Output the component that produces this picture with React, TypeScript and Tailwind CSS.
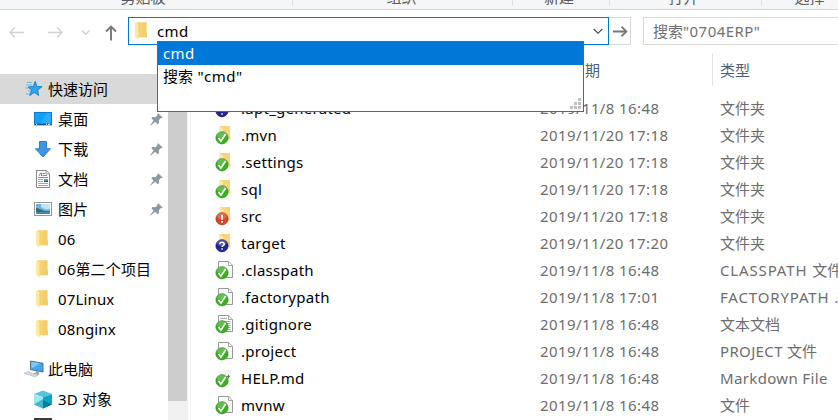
import type { ReactNode } from "react";

function FolderIcon({ className = "" }: { className?: string }) {
  return (
    <svg width="12" height="18" viewBox="0 0 12 18" className={className}>
      <path d="M1.5 .3h10v10l.5 1v4H4L1.5 9z" fill="#f7d374" />
      <path d="M8 .3h3.5v10l.5 1v4H6z" fill="#efc55f" opacity=".45" />
      <path d="M0 .3l3.8 2.4v13L3 17.6 0 14.9z" fill="#ffe9a2" />
      <path d="M3.8 2.7v13" stroke="#eec868" strokeWidth=".6" />
    </svg>
  );
}

function StarIcon() {
  return (
    <svg width="18" height="18" viewBox="0 0 18 18">
      <path d="M1 5h6M2 2.5h5M0 8h6M3 11h4M1 14h4" stroke="#63b5e6" strokeWidth=".9" />
      <path d="M10.2 1.3l1.6 5 5.3.4-4.4 3.3 1 5.5-4.4-3-4.6 3 1.9-5.3L3.2 7l5.1-.6z" fill="#2ba3f2" stroke="#1581cb" strokeWidth=".9" />
    </svg>
  );
}

function DesktopIcon() {
  return (
    <svg width="18" height="14" viewBox="0 0 18 14">
      <rect x=".5" y=".5" width="17" height="12.4" fill="#12a0fa" stroke="#0c7ccb" />
      <path d="M6 12L13 1h4v11z" fill="#2badff" />
      <path d="M1 12.3h16" stroke="#084f8c" strokeWidth="1.2" />
      <path d="M2 12.3h1M12 12.3h1M14 12.3h2" stroke="#fff" />
    </svg>
  );
}

function DownloadIcon() {
  return (
    <svg width="18" height="18" viewBox="0 0 18 18">
      <path d="M5.5 1.5h7v7.3h4L9 17 1.5 8.8h4z" fill="#3d97e6" stroke="#2b7cc9" />
    </svg>
  );
}

function DocumentIcon() {
  return (
    <svg width="16" height="18" viewBox="0 0 16 18" className="ml-px">
      <path d="M1.5 .5h9.8l3.2 3.2v13.8h-13z" fill="#fff" stroke="#858585" />
      <path d="M11 .8v3.2h3.3" fill="#e9e9e9" stroke="#858585" strokeWidth=".8" />
      <path d="M4 6l1.6-3h.9v3M7.5 3.5H10M7.5 5.5H12M3 7.5h10" fill="none" stroke="#2b8fc9" strokeWidth=".9" />
      <path d="M3 9.5h5M3 11.5h5M3 13.5h10M3 15.5h10" stroke="#9a9a9a" strokeWidth=".9" />
      <rect x="9" y="9" width="4" height="3" fill="#51a5cb" />
      <path d="M9 11l4-.6V12H9z" fill="#27597c" />
    </svg>
  );
}

function PictureIcon() {
  return (
    <svg width="18" height="14" viewBox="0 0 18 14">
      <rect x=".5" y=".5" width="17" height="13" fill="#fff" stroke="#969696" />
      <rect x="2" y="2" width="14" height="10" fill="#6fb1ea" />
      <path d="M7 2h9v5c-4 1-6 0-9-2z" fill="#c2e4f8" />
      <path d="M2 6c4 .2 6 3 11 3.2l3-.2v1.4H2z" fill="#3d6c60" />
      <path d="M2 10.4l14-.9V12H2z" fill="#4486b0" />
    </svg>
  );
}

function ComputerIcon() {
  return (
    <svg width="20" height="18" viewBox="0 0 20 18">
      <path d="M6.5 1l12.5 2.3v8.7L6.5 9.6z" fill="#3da9f5" stroke="#53636f" strokeWidth=".9" />
      <path d="M7.3 8.8L16 3.2l-8.7-1.5z" fill="#79c8fa" />
      <path d="M12 11l3 .7-.5 2-3-.8zM11 13l5 1.1-2 .8-5-1.2z" fill="#8d9da8" />
      <path d="M0 13.4l3.5-1.8L14 15.3 11.4 17z" fill="#e0e5e9" stroke="#a5b1ba" strokeWidth=".5" />
      <path d="M2 13.3l9.5 2.9M3.5 12.5l9 2.8" stroke="#a7b3bc" strokeWidth=".5" strokeDasharray="1 .8" />
    </svg>
  );
}

function CubeIcon() {
  return (
    <svg width="18" height="19" viewBox="0 0 18 19">
      <path d="M9 .4l9 3.7-9 3.1L0 4.1z" fill="#55c6d8" />
      <path d="M0 4.1l9 3.1v11.4L0 14.5z" fill="#9be9ef" />
      <path d="M0 14.5L9 9v9.6z" fill="#3fb6c9" />
      <path d="M18 4.1L9 7.2v11.4l9-4.1z" fill="#08a3c7" />
      <path d="M18 14.5L9 10v8.6z" fill="#087f9b" />
    </svg>
  );
}

function PinIcon() {
  return (
    <svg width="13" height="13" viewBox="0 0 13 13">
      <path d="M8.1.2l4.6 4.3-1.4.7-.5-.2-2 2.2.3 2.9-1.3 1.2-2.5-2.5L.5 12.6l-.4-.4 3.5-4.7L1.4 5.2 2.5 4l3 .3L7.6 2l-.3-.7z" fill="#8d979e" />
    </svg>
  );
}

type Status = "ok" | "alert" | "unknown";
type Kind = "folder" | "file" | "text" | "markdown";

function FileIcon({ kind, status }: { kind: Kind; status: Status }) {
  const edge = status === "ok" ? "#238c12" : status === "alert" ? "#ad2b14" : "#11115e";
  const fill = status === "ok" ? "#3eae24" : status === "alert" ? "#d5472a" : "#25258b";
  return (
    <svg width="19" height="21" viewBox="0 0 19 21">
      {kind === "folder" && (
        <>
          <path d="M5 1h10v10.5l.5 1v2H8z" fill="#f7d57d" />
          <path d="M4 1l4 2.5V18l-4-3z" fill="#ffe9aa" />
        </>
      )}
      {(kind === "file" || kind === "text") && (
        <>
          <path d="M3.5 1.5h10.2l3.8 3.8v12.2h-14z" fill="#fafafa" stroke="#989898" />
          <path d="M13.5 1.8v3.7h3.7" fill="#fff" stroke="#989898" strokeWidth=".9" />
        </>
      )}
      {kind === "text" && <path d="M5.5 4.5h6.5M5.5 7.5h10M5.5 9.5h10M8 11.5h7.5M8 13.5h7.5M8 15.5h7.5" stroke="#a2a2a2" strokeWidth=".9" />}
      {kind === "markdown" && (
        <>
          <path d="M3 4l13-2.8 1 15L9 18z" fill="#f2f2f2" />
          <path d="M11.8 8.5h3M13.5 6.8v3.5" stroke="#6b6b6b" strokeWidth="1.2" />
        </>
      )}
      <circle cx="7" cy="12.8" r="6.1" fill={fill} stroke={edge} strokeWidth=".7" />
      <ellipse cx="6.7" cy="10" rx="4.6" ry="3" fill="#fff" opacity=".2" />
      {status === "ok" && <path d="M3.5 13l2.4 3.1L10.6 9" fill="none" stroke="#fff" strokeWidth="1.6" />}
      {status === "alert" && <path d="M7 8.8v5M7 15v1.7" stroke="#fff" strokeWidth="1.8" />}
      {status === "unknown" && <path d="M4.8 11.2c0-2.7 4.7-2.5 4.4.1-.2 1.3-2.2 1.3-2.2 2.8M7 15.3v1.5" fill="none" stroke="#fff" strokeWidth="1.5" />}
    </svg>
  );
}

function SideItem({ icon, label, pinned }: { icon: ReactNode; label: ReactNode; pinned?: boolean }) {
  return (
    <div className="flex h-[30px] shrink-0 items-center pl-[34px]">
      <span className="flex w-6 shrink-0">{icon}</span>
      <span className="flex-1 tracking-[0.15px]">{label}</span>
      {pinned && <span className="mr-[5px]"><PinIcon /></span>}
    </div>
  );
}

const files: { name: string; kind: Kind; status: Status; date: string; latin?: string; type?: string; wide?: boolean }[] = [
  { name: ".apt_generated", kind: "folder", status: "unknown", date: "2019/11/8 16:48", type: "文件夹" },
  { name: ".mvn", kind: "folder", status: "ok", date: "2019/11/20 17:18", type: "文件夹" },
  { name: ".settings", kind: "folder", status: "ok", date: "2019/11/20 17:18", type: "文件夹" },
  { name: "sql", kind: "folder", status: "ok", date: "2019/11/20 17:18", type: "文件夹" },
  { name: "src", kind: "folder", status: "alert", date: "2019/11/20 17:18", type: "文件夹" },
  { name: "target", kind: "folder", status: "unknown", date: "2019/11/20 17:20", type: "文件夹" },
  { name: ".classpath", kind: "file", status: "ok", date: "2019/11/8 16:48", latin: "CLASSPATH ", type: "文件", wide: true },
  { name: ".factorypath", kind: "file", status: "ok", date: "2019/11/8 17:01", latin: "FACTORYPATH ...", wide: true },
  { name: ".gitignore", kind: "text", status: "ok", date: "2019/11/8 16:48", type: "文本文档" },
  { name: ".project", kind: "file", status: "ok", date: "2019/11/8 16:48", latin: "PROJECT ", type: "文件" },
  { name: "HELP.md", kind: "markdown", status: "ok", date: "2019/11/8 16:48", latin: "Markdown File" },
  { name: "mvnw", kind: "file", status: "ok", date: "2019/11/8 16:48", type: "文件" },
];

function RibbonGroup({ label, className }: { label: string; className: string }) {
  return (
    <div className={`flex h-[6px] shrink-0 justify-center border-r border-[#dfe0e1] ${className}`}>
      <span className="-mt-[10px] h-[15px] leading-[15px]">{label}</span>
    </div>
  );
}

export default function App() {
  return (
    <div className="relative flex h-[420px] w-[838px] flex-col overflow-hidden bg-white font-['Noto_Sans','Noto_Sans_CJK_SC',sans-serif] text-[15px] leading-5 whitespace-nowrap text-black">
      <header className="flex h-[10px] shrink-0 overflow-hidden border-b border-[#d5d7d9] bg-[#f5f6f7] text-[#5a5a5a]">
        <RibbonGroup label="剪贴板" className="w-[293px] pr-1.5" />
        <RibbonGroup label="组织" className="w-[220px] pr-0.5" />
        <RibbonGroup label="新建" className="w-[97px] pr-1" />
        <RibbonGroup label="打开" className="w-[152px] pr-1" />
        <RibbonGroup label="选择" className="w-[100px] pr-1" />
      </header>

      <div className="flex h-[36px] shrink-0 pt-[7px]">
        <div className="flex w-[128px] shrink-0 items-center">
          <svg width="128" height="28" viewBox="0 0 128 28" fill="none">
            <path d="M24 14.5H10M15 9.5l-5 5 5 5M48 14.5h14M57 9.5l5 5-5 5" stroke="#d2d2d2" strokeWidth="1.5" />
            <path d="M82 12.5l3.7 3.7 3.7-3.7" stroke="#d2d2d2" strokeWidth="1.5" />
            <path d="M111 22.5V9M106 13.5l5-5 5 5" stroke="#777" strokeWidth="1.9" />
          </svg>
        </div>
        <div className="flex h-7 w-[481px] shrink-0 items-center border border-[#0078d7] pl-1.5">
          <FolderIcon className="-mt-px shrink-0" />
          <span className="ml-[10px] flex-1 tracking-[0.4px]">cmd</span>
          <svg width="10" height="7" viewBox="0 0 10 7" fill="none" className="mr-[5px]"><path d="M.7 1L5 5.3 9.3 1" stroke="#444" strokeWidth="1.1" /></svg>
        </div>
        <div className="flex h-7 w-[22px] shrink-0 items-center justify-center border border-l-0 border-[#d9d9d9]">
          <svg width="16" height="14" viewBox="0 0 16 14" fill="none"><path d="M1 7.5h13M9.5 2.7l4.8 4.8-4.8 4.8" stroke="#777" strokeWidth="1.8" /></svg>
        </div>
        <div className="ml-3 flex h-7 w-[210px] shrink-0 items-center border border-[#d9d9d9] pl-[9px] text-[#707070]">
          <span>搜索<span className="tracking-[0.45px]">"0704ERP"</span></span>
        </div>
      </div>

      <main className="flex min-h-0 flex-1">
        <nav className="flex w-[168px] shrink-0 flex-col overflow-hidden pt-7">
          <div className="flex h-[30px] shrink-0 items-center bg-[#d9d9d9] pl-[25px]">
            <StarIcon /><span className="ml-[5px]">快速访问</span>
          </div>
          <SideItem icon={<DesktopIcon />} label="桌面" pinned />
          <SideItem icon={<DownloadIcon />} label="下载" pinned />
          <SideItem icon={<DocumentIcon />} label="文档" pinned />
          <SideItem icon={<PictureIcon />} label="图片" pinned />
          <SideItem icon={<FolderIcon className="ml-0.5" />} label="06" />
          <SideItem icon={<FolderIcon className="ml-0.5" />} label="06第二个项目" />
          <SideItem icon={<FolderIcon className="ml-0.5" />} label="07Linux" />
          <SideItem icon={<FolderIcon className="ml-0.5" />} label="08nginx" />
          <div className="mt-[10px] flex h-[30px] shrink-0 items-center pl-6">
            <ComputerIcon /><span className="ml-1">此电脑</span>
          </div>
          <SideItem icon={<CubeIcon />} label="3D 对象" />
          <div className="mt-1 ml-[34px] h-3 w-[18px] shrink-0 bg-[#3b3b3b]" />
        </nav>
        <div className="w-5 shrink-0 bg-[#f0f0f0] pr-px"><div className="h-[355px] bg-[#cdcdcd]" /></div>
        <div className="ml-0.5 w-px shrink-0 bg-[#f3f3f3]" />
        <section className="flex w-[647px] shrink-0 flex-col">
          <div className="flex h-12 shrink-0 pt-2 text-[#4c607a]">
            <div className="flex h-8 w-[339px] items-center pl-[50px]">名称</div>
            <div className="flex h-8 w-[183px] items-center border-r border-[#e5e5e5] pl-[10px]">修改日期</div>
            <div className="flex h-8 items-center pl-[7px]">类型</div>
          </div>
          {files.map((f) => (
            <div key={f.name} className="flex h-[27px] shrink-0 items-center pl-6">
              <span className="mt-0.5 w-[26px] shrink-0"><FileIcon kind={f.kind} status={f.status} /></span>
              <span className="w-[299px] shrink-0 tracking-[0.27px]">{f.name}</span>
              <span className="w-[180px] shrink-0 tracking-[0.4px] text-[#6d6d6d]">{f.date}</span>
              <span className="w-[130px] shrink-0 text-[#6d6d6d]">
                {f.latin && <span className={f.wide ? "tracking-[0.85px]" : "tracking-[0.35px]"}>{f.latin}</span>}
                {f.type}
              </span>
            </div>
          ))}
        </section>
      </main>

      <div className="absolute top-[41px] left-[157px] flex h-[71px] w-[427px] flex-col border border-[#646464] bg-white">
        <div className="flex h-[23px] items-center bg-[#0078d7] pb-0.5 pl-[5px] text-white"><span className="tracking-[0.4px]">cmd</span></div>
        <div className="flex h-[23px] items-center pb-0.5 pl-[5px]"><span>搜索<span className="tracking-[0.5px]"> "cmd"</span></span></div>
        <svg width="11" height="11" viewBox="0 0 11 11" className="mt-auto mr-0.5 mb-0.5 self-end" fill="#bfbfbf">
          <path d="M8 0h3v3H8zM8 4h3v3H8zM4 4h3v3H4zM0 8h3v3H0zM4 8h3v3H4zM8 8h3v3H8z" />
        </svg>
      </div>
    </div>
  );
}
